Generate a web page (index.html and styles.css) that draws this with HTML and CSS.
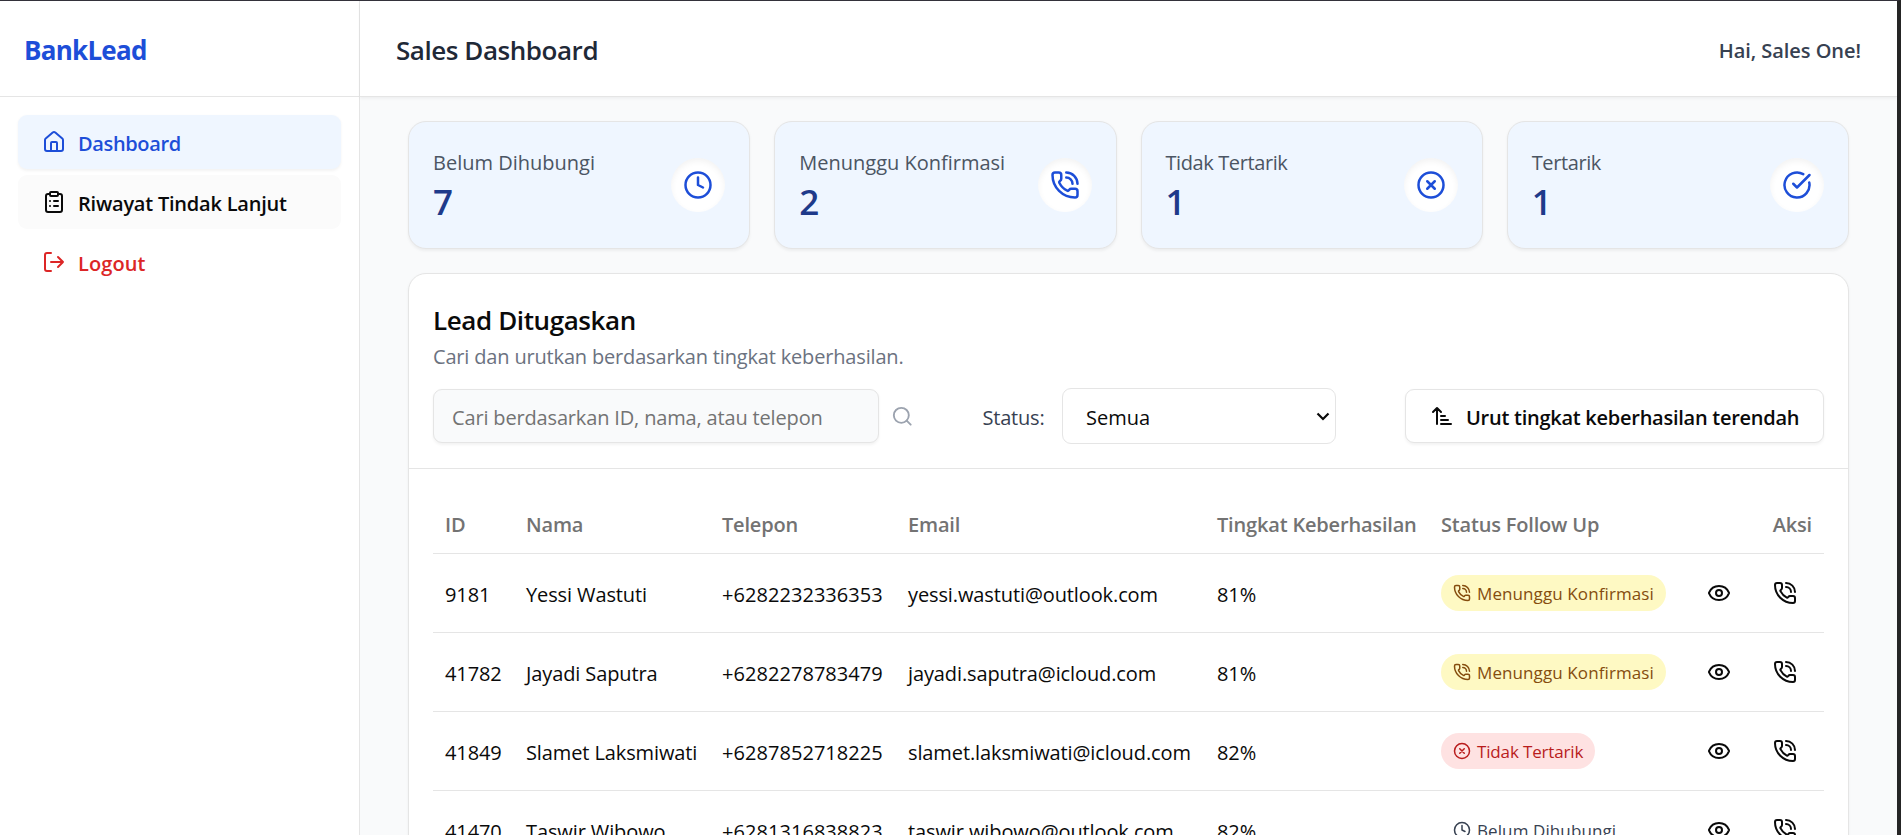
FILE: index.html
```html
<!DOCTYPE html>
<html lang="id">
  <head>
    <meta charset="UTF-8" />
    <meta name="viewport" content="width=device-width, initial-scale=1.0" />
    <title>BankLead - Sales Dashboard</title>
    <link rel="stylesheet" href="styles.css">
  </head>
  <body>
    <!-- Icon set -->
    <svg class="sprite" aria-hidden="true">
      <symbol id="i-home" viewBox="0 0 24 24">
        <path d="M15 21v-8a1 1 0 0 0-1-1h-4a1 1 0 0 0-1 1v8" />
        <path d="M3 10a2 2 0 0 1 .709-1.528l7-5.999a2 2 0 0 1 2.582 0l7 5.999A2 2 0 0 1 21 10v9a2 2 0 0 1-2 2H5a2 2 0 0 1-2-2z" />
      </symbol>
      <symbol id="i-clipboard" viewBox="0 0 24 24">
        <rect width="8" height="4" x="8" y="2" rx="1" ry="1" />
        <path d="M16 4h2a2 2 0 0 1 2 2v14a2 2 0 0 1-2 2H6a2 2 0 0 1-2-2V6a2 2 0 0 1 2-2h2" />
        <path d="M12 11h4M12 16h4M8 11h.01M8 16h.01" />
      </symbol>
      <symbol id="i-logout" viewBox="0 0 24 24">
        <path d="M9 21H5a2 2 0 0 1-2-2V5a2 2 0 0 1 2-2h4" />
        <path d="m16 17 5-5-5-5M21 12H9" />
      </symbol>
      <symbol id="i-clock" viewBox="0 0 24 24">
        <circle cx="12" cy="12" r="10" />
        <path d="M12 6v6l4 2" />
      </symbol>
      <symbol id="i-phone" viewBox="0 0 24 24">
        <path d="M13 2a9 9 0 0 1 9 9M13 6a5 5 0 0 1 5 5" />
        <path d="M13.832 16.568a1 1 0 0 0 1.213-.303l.355-.465A2 2 0 0 1 17 15h3a2 2 0 0 1 2 2v3a2 2 0 0 1-2 2A18 18 0 0 1 2 4a2 2 0 0 1 2-2h3a2 2 0 0 1 2 2v3a2 2 0 0 1-.8 1.6l-.468.351a1 1 0 0 0-.292 1.233 14 14 0 0 0 6.392 6.384" />
      </symbol>
      <symbol id="i-x" viewBox="0 0 24 24">
        <circle cx="12" cy="12" r="10" />
        <path d="m15 9-6 6M9 9l6 6" />
      </symbol>
      <symbol id="i-check" viewBox="0 0 24 24">
        <path d="M21.801 10A10 10 0 1 1 17 3.335" />
        <path d="m9 11 3 3L22 4" />
      </symbol>
      <symbol id="i-search" viewBox="0 0 24 24">
        <circle cx="11" cy="11" r="8" />
        <path d="m21 21-4.3-4.3" />
      </symbol>
      <symbol id="i-sort" viewBox="0 0 24 24">
        <path d="m3 8 4-4 4 4M7 4v16M11 12h4M11 16h7M11 20h10" />
      </symbol>
      <symbol id="i-eye" viewBox="0 0 24 24">
        <path d="M2.062 12.348a1 1 0 0 1 0-.696 10.75 10.75 0 0 1 19.876 0 1 1 0 0 1 0 .696 10.75 10.75 0 0 1-19.876 0" />
        <circle cx="12" cy="12" r="3" />
      </symbol>
    </svg>

    <aside class="sidebar">
      <div class="brand">BankLead</div>
      <nav class="nav">
        <a class="nav-item active"><svg class="icon"><use href="#i-home" /></svg><span>Dashboard</span></a>
        <a class="nav-item muted"><svg class="icon"><use href="#i-clipboard" /></svg><span>Riwayat Tindak Lanjut</span></a>
        <a class="nav-item logout"><svg class="icon"><use href="#i-logout" /></svg><span>Logout</span></a>
      </nav>
    </aside>

    <div class="page">
      <header class="topbar">
        <h1>Sales Dashboard</h1>
        <span class="greeting">Hai, Sales One!</span>
      </header>

      <main class="content">
        <section class="stats">
          <div class="stat">
            <div>
              <div class="stat-label">Belum Dihubungi</div>
              <div class="stat-value">7</div>
            </div>
            <div class="stat-icon"><svg class="icon"><use href="#i-clock" /></svg></div>
          </div>
          <div class="stat">
            <div>
              <div class="stat-label">Menunggu Konfirmasi</div>
              <div class="stat-value">2</div>
            </div>
            <div class="stat-icon"><svg class="icon"><use href="#i-phone" /></svg></div>
          </div>
          <div class="stat">
            <div>
              <div class="stat-label tight">Tidak Tertarik</div>
              <div class="stat-value">1</div>
            </div>
            <div class="stat-icon"><svg class="icon"><use href="#i-x" /></svg></div>
          </div>
          <div class="stat">
            <div>
              <div class="stat-label tight">Tertarik</div>
              <div class="stat-value">1</div>
            </div>
            <div class="stat-icon"><svg class="icon"><use href="#i-check" /></svg></div>
          </div>
        </section>

        <section class="leads">
          <div class="leads-header">
            <h2>Lead Ditugaskan</h2>
            <p>Cari dan urutkan berdasarkan tingkat keberhasilan.</p>
            <div class="controls">
              <input class="search" type="text" placeholder="Cari berdasarkan ID, nama, atau telepon" />
              <svg class="icon search-icon"><use href="#i-search" /></svg>
              <label class="status-label" for="status">Status:</label>
              <div class="select-wrap">
                <select id="status">
                  <option>Semua</option>
                  <option>Belum Dihubungi</option>
                  <option>Menunggu Konfirmasi</option>
                  <option>Tidak Tertarik</option>
                  <option>Tertarik</option>
                </select>
                <svg class="chevron" viewBox="0 0 14 9"><path d="m1.5 1.5 5.5 5.5 5.5-5.5" /></svg>
              </div>
              <button class="sort-btn"><svg class="icon"><use href="#i-sort" /></svg><span>Urut tingkat keberhasilan terendah</span></button>
            </div>
          </div>

          <div class="table-wrapper">
            <table>
              <colgroup>
                <col class="c-id" />
                <col class="c-name" />
                <col class="c-phone" />
                <col class="c-email" />
                <col class="c-rate" />
                <col class="c-status" />
                <col />
              </colgroup>
              <thead>
                <tr>
                  <th>ID</th>
                  <th>Nama</th>
                  <th>Telepon</th>
                  <th>Email</th>
                  <th>Tingkat Keberhasilan</th>
                  <th>Status Follow Up</th>
                  <th class="right">Aksi</th>
                </tr>
              </thead>
              <tbody>
                <tr>
                  <td><span>9181</span></td>
                  <td><span>Yessi Wastuti</span></td>
                  <td class="phone"><span>+6282232336353</span></td>
                  <td><span>yessi.wastuti@outlook.com</span></td>
                  <td><span>81%</span></td>
                  <td><div class="badge waiting"><svg class="icon"><use href="#i-phone" /></svg><span>Menunggu Konfirmasi</span></div></td>
                  <td>
                    <div class="actions">
                      <button><svg class="icon"><use href="#i-eye" /></svg></button>
                      <button><svg class="icon"><use href="#i-phone" /></svg></button>
                    </div>
                  </td>
                </tr>
                <tr>
                  <td><span>41782</span></td>
                  <td><span>Jayadi Saputra</span></td>
                  <td class="phone"><span>+6282278783479</span></td>
                  <td><span>jayadi.saputra@icloud.com</span></td>
                  <td><span>81%</span></td>
                  <td><div class="badge waiting"><svg class="icon"><use href="#i-phone" /></svg><span>Menunggu Konfirmasi</span></div></td>
                  <td>
                    <div class="actions">
                      <button><svg class="icon"><use href="#i-eye" /></svg></button>
                      <button><svg class="icon"><use href="#i-phone" /></svg></button>
                    </div>
                  </td>
                </tr>
                <tr>
                  <td><span>41849</span></td>
                  <td><span>Slamet Laksmiwati</span></td>
                  <td class="phone"><span>+6287852718225</span></td>
                  <td><span>slamet.laksmiwati@icloud.com</span></td>
                  <td><span>82%</span></td>
                  <td><div class="badge rejected"><svg class="icon"><use href="#i-x" /></svg><span>Tidak Tertarik</span></div></td>
                  <td>
                    <div class="actions">
                      <button><svg class="icon"><use href="#i-eye" /></svg></button>
                      <button><svg class="icon"><use href="#i-phone" /></svg></button>
                    </div>
                  </td>
                </tr>
                <tr>
                  <td><span>41470</span></td>
                  <td><span>Taswir Wibowo</span></td>
                  <td class="phone"><span>+6281316838823</span></td>
                  <td><span>taswir.wibowo@outlook.com</span></td>
                  <td><span>82%</span></td>
                  <td><div class="badge new"><svg class="icon"><use href="#i-clock" /></svg><span>Belum Dihubungi</span></div></td>
                  <td>
                    <div class="actions">
                      <button><svg class="icon"><use href="#i-eye" /></svg></button>
                      <button><svg class="icon"><use href="#i-phone" /></svg></button>
                    </div>
                  </td>
                </tr>
              </tbody>
            </table>
          </div>
        </section>
      </main>
    </div>
  </body>
</html>
```
FILE: styles.css
```css
:root {
  --blue: #1d4ed8;
  --blue-light: #eff6ff;
  --border: #e5e5e5;
  --shadow: 0 1.5px 3px rgba(0, 0, 0, 0.05);
}
* {
  box-sizing: border-box;
  margin: 0;
  padding: 0;
}
body {
  display: flex;
  height: 100vh;
  overflow: hidden;
  border-top: 1px solid #33313a;
  border-right: 4px solid #252525;
  background: #f9fafb;
  color: #0a0a0a;
  font-family: "Segoe UI", "Open Sans", sans-serif;
  font-size: 20px;
  line-height: 30px;
}
button,
input,
select {
  font: inherit;
  color: inherit;
  letter-spacing: inherit;
}
.sprite {
  display: none;
}
.icon {
  width: 24px;
  height: 24px;
  flex-shrink: 0;
  fill: none;
  stroke: currentColor;
  stroke-width: 2;
  stroke-linecap: round;
  stroke-linejoin: round;
}

/* Sidebar */
.sidebar {
  width: 360px;
  flex-shrink: 0;
  background: #fff;
  border-right: 1px solid var(--border);
}
.brand {
  height: 96px;
  padding: 3px 24px 0;
  border-bottom: 1px solid var(--border);
  color: var(--blue);
  font-size: 26px;
  font-weight: 700;
  line-height: 92px;
  letter-spacing: -0.75px;
}
.nav {
  display: flex;
  flex-direction: column;
  gap: 6px;
  padding: 18px;
}
.nav-item {
  display: flex;
  align-items: center;
  gap: 12px;
  height: 54px;
  padding: 0 24px;
  border-radius: 9px;
  font-weight: 600;
  letter-spacing: -0.22px;
}
.nav-item span {
  padding-top: 3px;
}
.nav-item.active {
  background: var(--blue-light);
  color: var(--blue);
  box-shadow: var(--shadow);
  letter-spacing: -0.36px;
}
.nav-item.muted {
  background: #fbfbfb;
}
.nav-item.logout {
  color: #dc2626;
  letter-spacing: 0.1px;
}

/* Top bar */
.page {
  flex: 1;
  min-width: 0;
}
.topbar {
  display: flex;
  align-items: center;
  justify-content: space-between;
  height: 96px;
  padding: 3px 36px 0;
  background: #fff;
  border-bottom: 1px solid var(--border);
  box-shadow: var(--shadow);
}
.topbar h1 {
  color: #1f2937;
  font-size: 26px;
  font-weight: 600;
  letter-spacing: -0.45px;
}
.greeting {
  padding-top: 2px;
  color: #374151;
  font-weight: 600;
  letter-spacing: -0.04px;
}

.content {
  padding: 24px 48px;
}

/* Stat cards */
.stats {
  display: grid;
  grid-template-columns: repeat(4, 1fr);
  gap: 24px;
  margin-bottom: 24px;
}
.stat {
  display: flex;
  align-items: center;
  justify-content: space-between;
  height: 128px;
  padding: 0 24px;
  background: var(--blue-light);
  border: 1px solid var(--border);
  border-radius: 18px;
  box-shadow: var(--shadow);
}
.stat-label {
  padding-top: 3px;
  color: #4b5563;
}
.stat-label.tight {
  letter-spacing: -0.4px;
}
.stat-value {
  color: #1e3a8a;
  font-size: 35px;
  font-weight: 600;
  line-height: 48px;
  letter-spacing: -1px;
}
.stat-icon {
  display: flex;
  padding: 12px;
  border-radius: 50%;
  background: #fff;
  color: var(--blue);
  box-shadow: inset 0 3px 6px rgba(0, 0, 0, 0.05);
}
.stat-icon .icon {
  width: 30px;
  height: 30px;
}

/* Leads */
.leads {
  background: #fff;
  border: 1px solid var(--border);
  border-radius: 18px;
  box-shadow: var(--shadow);
}
.leads-header {
  padding: 28px 24px 24px;
  border-bottom: 1px solid var(--border);
}
.leads-header h2 {
  margin-bottom: 3px;
  font-size: 26px;
  font-weight: 600;
  line-height: 36px;
  letter-spacing: -0.4px;
}
.leads-header p {
  margin-bottom: 15px;
  color: #6b7280;
  line-height: 32px;
  letter-spacing: -0.17px;
}
.controls {
  display: flex;
  align-items: center;
}
.search {
  width: 446px;
  height: 54px;
  padding: 2px 18px 0;
  background: #f9fafb;
  border: 1px solid var(--border);
  border-radius: 9px;
  box-shadow: var(--shadow);
  letter-spacing: -0.16px;
}
.search::placeholder {
  color: #737373;
  opacity: 1;
}
.search-icon {
  width: 22.5px;
  height: 22.5px;
  margin-left: 12px;
  color: #9ca3af;
}
.status-label {
  margin-left: 69px;
  padding-top: 3px;
  color: #374151;
  letter-spacing: -0.2px;
}
.select-wrap {
  position: relative;
  width: 274px;
  margin-left: auto;
  margin-right: 69px;
}
.select-wrap select {
  display: block;
  width: 100%;
  height: 56px;
  padding: 3px 23px 0;
  appearance: none;
  background: #fff;
  border: 1px solid var(--border);
  border-radius: 9px;
}
.chevron {
  position: absolute;
  right: 6px;
  top: 24px;
  width: 14px;
  height: 9px;
  fill: none;
  stroke: #0a0a0a;
  stroke-width: 2.2;
}
.sort-btn {
  display: flex;
  align-items: center;
  gap: 12px;
  width: 419px;
  height: 54px;
  padding: 0 24px;
  background: #fff;
  border: 1px solid var(--border);
  border-radius: 9px;
  box-shadow: var(--shadow);
  font-weight: 600;
  letter-spacing: -0.26px;
  white-space: nowrap;
}
.sort-btn span {
  padding-top: 3px;
}

/* Table */
.table-wrapper {
  padding: 24px;
}
table {
  width: 100%;
  table-layout: fixed;
  border-spacing: 0;
}
.c-id {
  width: 81px;
}
.c-name {
  width: 196px;
}
.c-phone {
  width: 186px;
}
.c-email {
  width: 309px;
}
.c-rate {
  width: 224px;
}
.c-status {
  width: 250px;
}
th,
td {
  padding: 0 12px;
  border-bottom: 1px solid var(--border);
  text-align: left;
  white-space: nowrap;
}
th {
  height: 61px;
  padding-top: 3px;
  color: #737373;
  font-weight: 600;
  letter-spacing: -0.18px;
}
th.right {
  text-align: right;
}
td {
  height: 79px;
  letter-spacing: -0.11px;
}
td.phone {
  letter-spacing: 0.05px;
}
td > span {
  display: block;
  padding-top: 3px;
}
.badge {
  display: inline-flex;
  align-items: center;
  gap: 6px;
  height: 36px;
  padding: 0 12px;
  border-radius: 18px;
  vertical-align: middle;
  font-size: 17px;
  letter-spacing: 0.1px;
}
.badge span {
  padding-top: 1px;
}
.badge .icon {
  width: 18px;
  height: 18px;
}
.badge.waiting {
  background: #fef9c3;
  color: #854d0e;
}
.badge.rejected {
  background: #fee2e2;
  color: #b91c1c;
  letter-spacing: -0.15px;
}
.badge.new {
  color: #374151;
}
.actions {
  display: flex;
  justify-content: flex-end;
  gap: 12px;
}
.actions button {
  display: flex;
  justify-content: center;
  width: 54px;
  background: none;
  border: none;
}
```
